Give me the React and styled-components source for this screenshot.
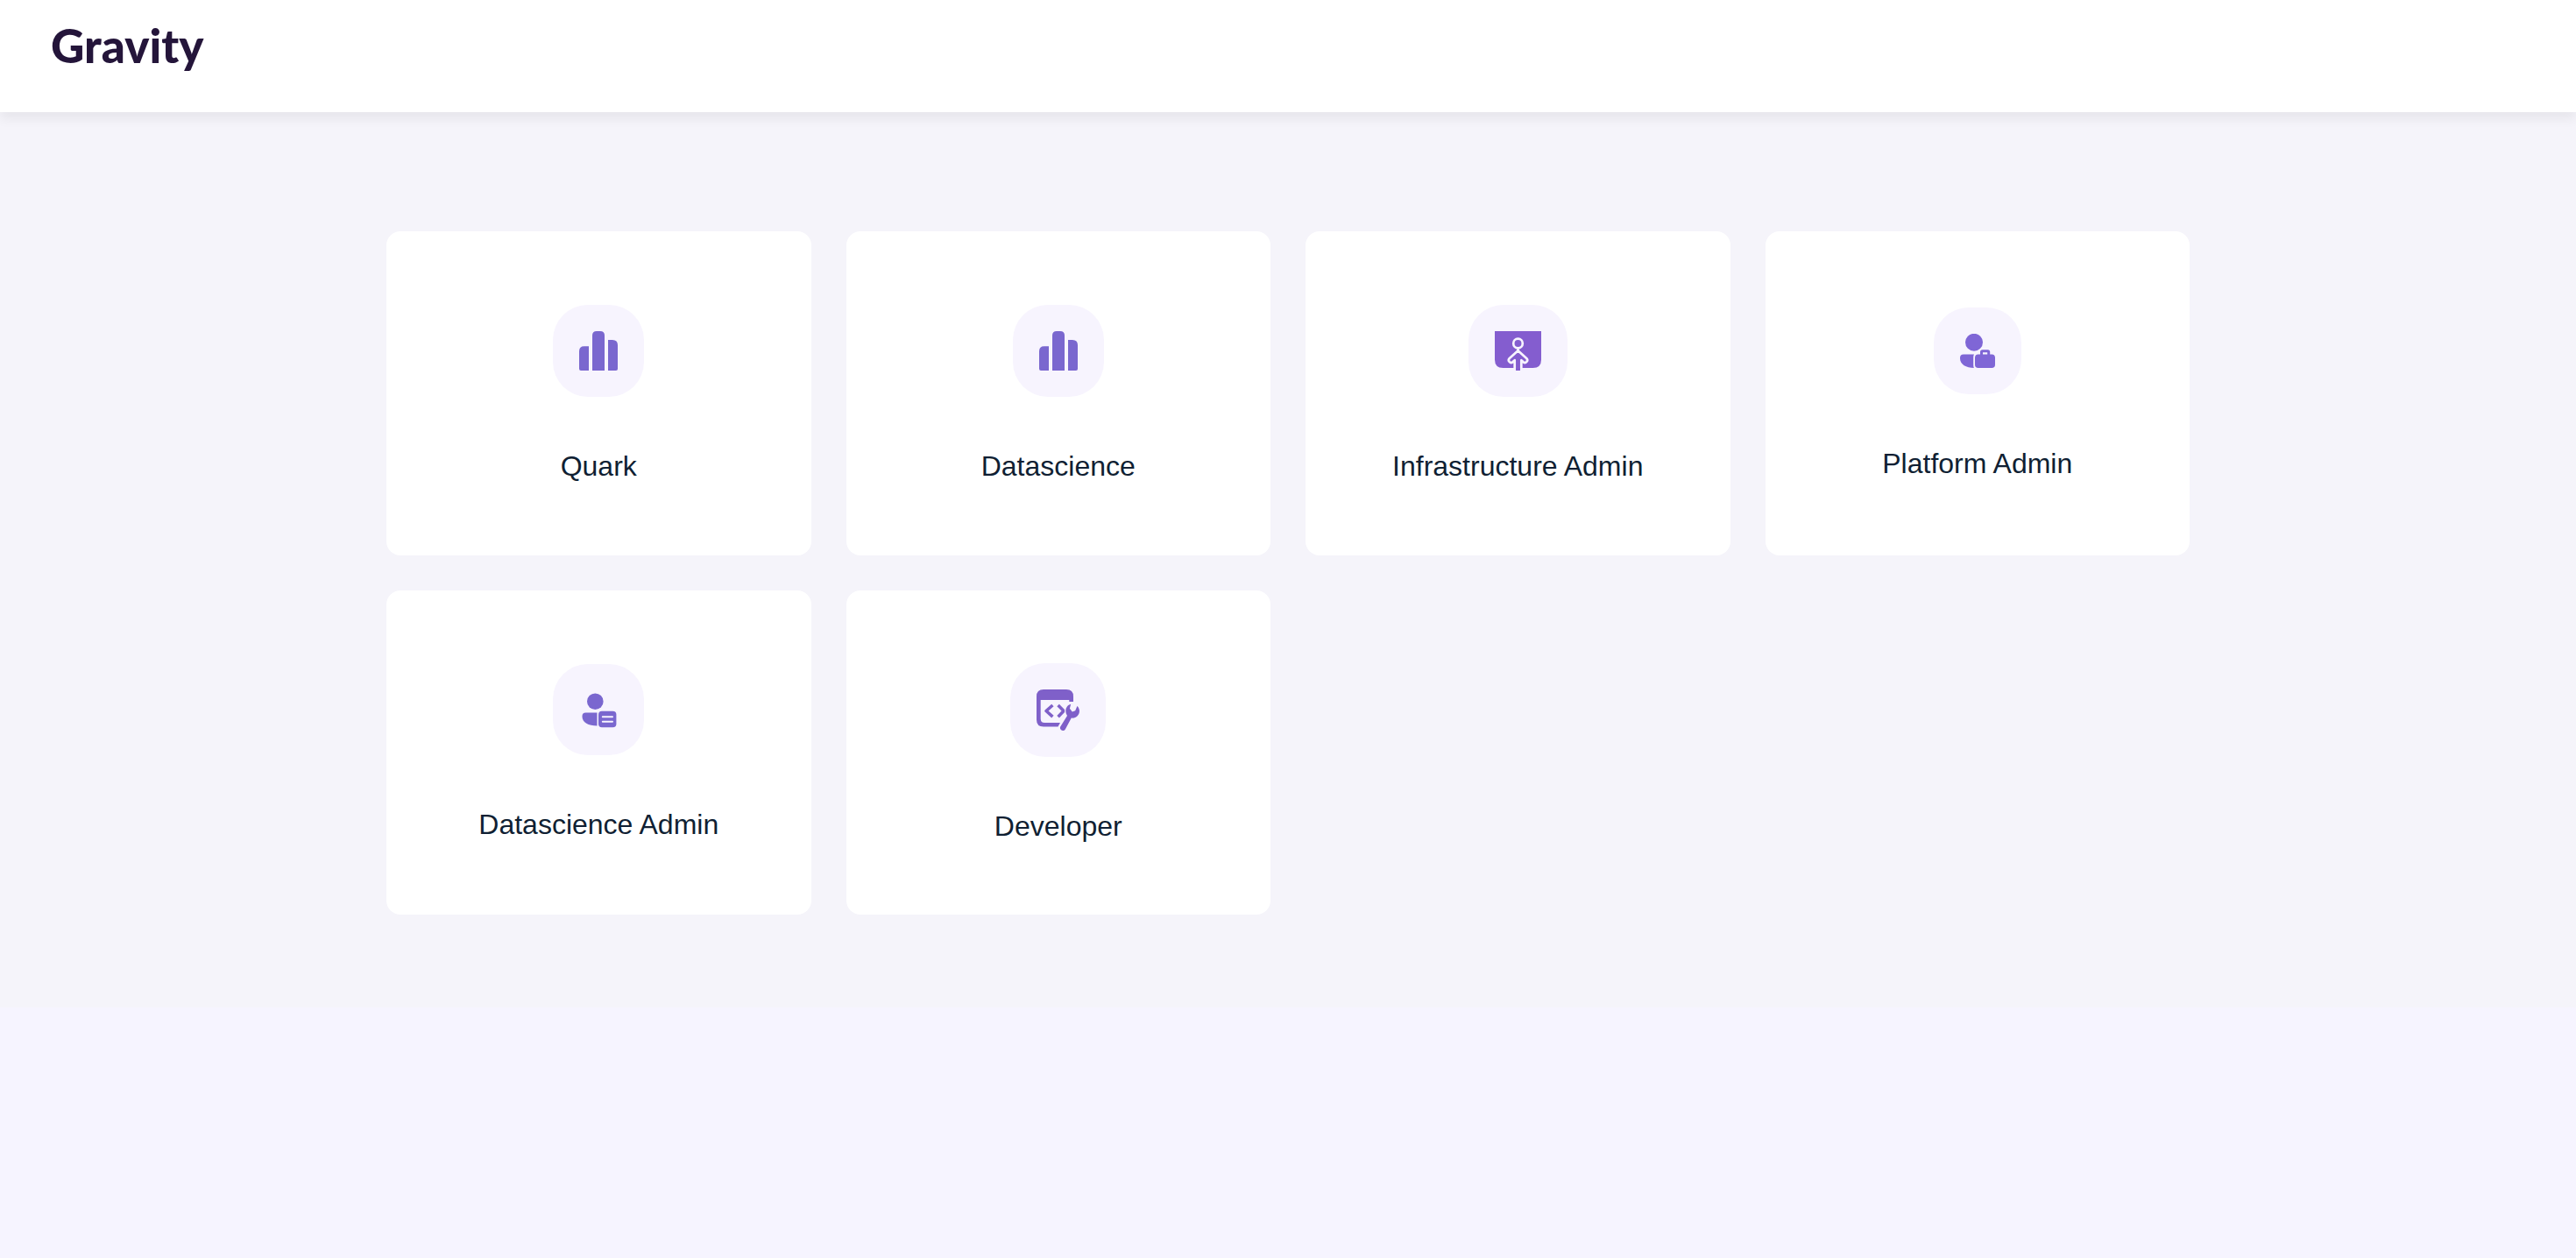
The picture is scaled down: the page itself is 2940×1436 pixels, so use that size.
import React from "react";
import styled, { createGlobalStyle } from "styled-components";

const TINT = "#f7f4fe";

const GlobalStyle = createGlobalStyle`
  *, *::before, *::after { box-sizing: border-box; }
  body {
    margin: 0;
    min-height: 100vh;
    background: #f6f4ff;
    font-family: "Liberation Sans", Helvetica, Arial, sans-serif;
  }
`;

const Header = styled.header`
  position: relative;
  display: flex;
  align-items: flex-start;
  height: 128px;
  padding: 20px 58px;
  background: #ffffff;
  box-shadow: 0 8px 12px rgba(0, 0, 0, 0.06);
`;

const Logo = styled.a`
  color: #24153a;
  font-family: Lato, "Open Sans", sans-serif;
  font-size: 53px;
  font-weight: 900;
  line-height: 64px;
  text-decoration: none;
`;

const Main = styled.main`
  padding: 136px 15% 106px;
  background: #f5f4fa;
`;

const Grid = styled.nav`
  display: grid;
  grid-template-columns: repeat(4, 1fr);
  grid-auto-rows: 370px;
  gap: 40px;
`;

const Card = styled.a`
  display: flex;
  flex-direction: column;
  align-items: center;
  justify-content: center;
  gap: 60px;
  border-radius: 16px;
  background: #ffffff;
  color: #101f33;
  text-decoration: none;
`;

const Badge = styled.span`
  display: flex;
  padding: 30px;
  border-radius: 40px;
  background: ${TINT};
  color: ${(p) => p.$color};
`;

const Label = styled.span`
  font-size: 32px;
  line-height: 38px;
`;

function BarsIcon() {
  return (
    <svg width="44" height="45" viewBox="0 0 44 45" fill="currentColor" aria-hidden="true">
      <path d="M11 17.3V45H2Q0 45 0 43V23Q0 17.3 5.7 17.3Z" />
      <path d="M15 45V5Q15 0 20 0H24Q29 0 29 5V45Z" />
      <path d="M33 10H38Q44 10 44 16V43Q44 45 42 45H33Z" />
    </svg>
  );
}

function InfrastructureIcon() {
  return (
    <svg width="53" height="45" viewBox="0 0 53 45" fill="none" aria-hidden="true">
      <path d="M0 0H53V32.5Q53 42 43.5 42H9.5Q0 42 0 32.5Z" fill="currentColor" />
      <path d="M22.9 34V45H30.1V34Z" fill="currentColor" />
      <g stroke={TINT} strokeWidth="2.7" strokeLinejoin="round">
        <circle cx="26.5" cy="14" r="5.3" />
        <path d="M26.5 19.5V22.5" />
        <path d="M22.7 45V33.2L20.6 35.1C17.6 37.6 14.2 33.6 16.8 30.9L26.5 22.2L36.2 30.9C38.8 33.6 35.4 37.6 32.4 35.1L30.3 33.2V45" />
      </g>
      <path d="M24.2 42H28.8V43Q28.8 45 26.5 45Q24.2 45 24.2 43Z" fill="currentColor" />
    </svg>
  );
}

function PlatformAdminIcon() {
  return (
    <svg width="40" height="39" viewBox="0 0 40 39" fill="currentColor" aria-hidden="true">
      <circle cx="16" cy="9.8" r="10" />
      <path d="M4 23.5H16Q15.2 24.8 15.2 27V35.5Q15.2 37.8 16 39C7 39 0 35 0 28V27.5Q0 23.5 4 23.5Z" />
      <path
        fillRule="evenodd"
        d="M20.8 23.5H23V20.8Q23 18.3 25.5 18.3H31.7Q34.2 18.3 34.2 20.8V23.5H36.2Q40 23.5 40 27.3V35.2Q40 39 36.2 39H20.8Q17 39 17 35.2V27.3Q17 23.5 20.8 23.5ZM26 21.2V23.5H31.2V21.2Z"
      />
    </svg>
  );
}

function DatascienceAdminIcon() {
  return (
    <svg width="44" height="44" viewBox="0 0 44 44" fill="currentColor" aria-hidden="true">
      <circle cx="18.3" cy="12.7" r="9.3" />
      <path d="M7.5 25.5H20.5V40.5C10.5 40.5 3.5 36.5 3.5 30V29.5Q3.5 25.5 7.5 25.5Z" />
      <rect x="22" y="23.7" width="20.4" height="18.6" rx="4" />
      <path d="M26.8 30.2H38M26.8 35.8H38" stroke={TINT} strokeWidth="2" strokeLinecap="round" />
    </svg>
  );
}

function DeveloperIcon() {
  const wrench =
    "M39.2 16.8C34 18 31.4 24.4 35 30L27.2 42.4C25.6 46 30.6 48.8 32.8 45.4L39.8 32.6C45.6 33.4 49.8 28.4 48.8 23.2C48.4 21.4 47.6 20 46.4 19L44.2 24.2L40.8 25.4L37.9 21.8Z";
  return (
    <svg width="49" height="47" viewBox="0 0 49 47" fill="currentColor" aria-hidden="true">
      <path
        fillRule="evenodd"
        d="M8 0H34Q42 0 42 8V14H37.3V12H4.7V33.5Q4.7 38 9.2 38H27L24.5 42.4H8Q0 42.4 0 34.4V8Q0 0 8 0Z"
      />
      <path
        d="M18.4 18L11 24.5L18.4 31.2M24.6 18L31 24.5L24.6 31.2"
        fill="none"
        stroke="currentColor"
        strokeWidth="3.6"
        strokeLinejoin="round"
      />
      <path d={wrench} stroke={TINT} strokeWidth="2.4" />
      <path d={wrench} />
    </svg>
  );
}

const apps = [
  { name: "Quark", color: "#7a67cf", Icon: BarsIcon },
  { name: "Datascience", color: "#7a67cf", Icon: BarsIcon },
  { name: "Infrastructure Admin", color: "#845dcf", Icon: InfrastructureIcon },
  { name: "Platform Admin", color: "#7f66d6", Icon: PlatformAdminIcon },
  { name: "Datascience Admin", color: "#7a67cf", Icon: DatascienceAdminIcon },
  { name: "Developer", color: "#7f60c9", Icon: DeveloperIcon },
];

export default function App() {
  return (
    <>
      <GlobalStyle />
      <Header>
        <Logo href="#">Gravity</Logo>
      </Header>
      <Main>
        <Grid>
          {apps.map(({ name, color, Icon }) => (
            <Card key={name} href="#">
              <Badge $color={color}>
                <Icon />
              </Badge>
              <Label>{name}</Label>
            </Card>
          ))}
        </Grid>
      </Main>
    </>
  );
}
